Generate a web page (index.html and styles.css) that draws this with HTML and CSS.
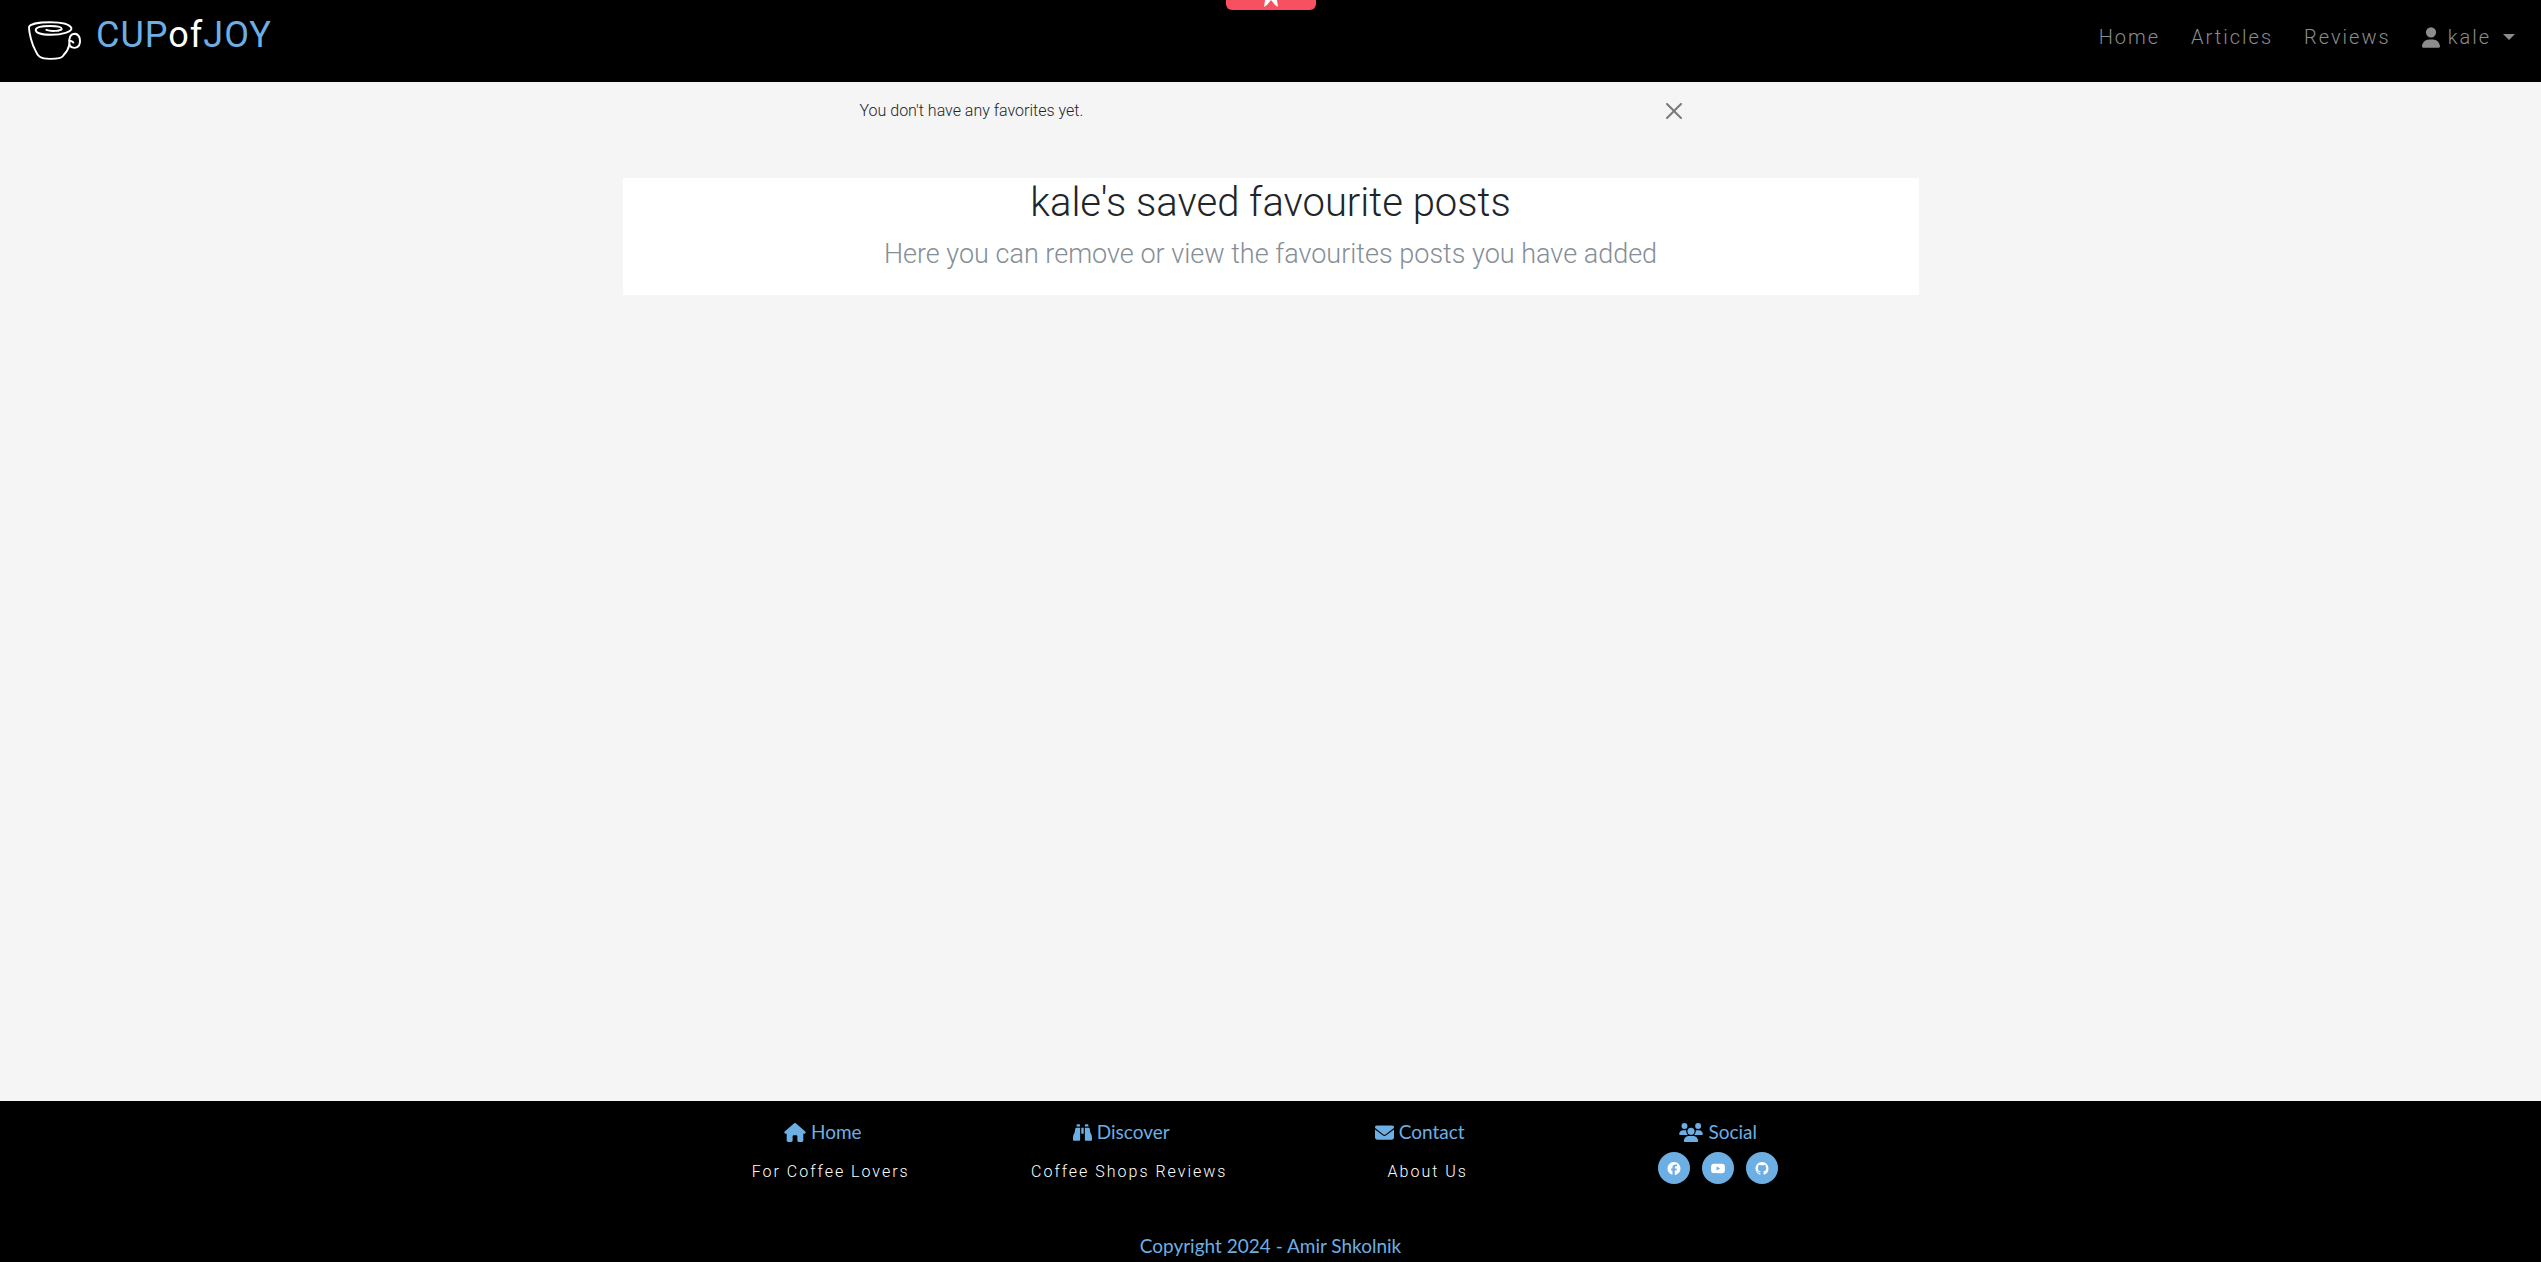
FILE: index.html
```html
<!DOCTYPE html>
<html lang="en">
<head>
<meta charset="utf-8">
<meta name="viewport" content="width=device-width, initial-scale=1">
<title>Cup of Joy - Favourites</title>
<link rel="stylesheet" href="styles.css">
</head>
<body>
<header class="navbar">
  <a class="brand" href="#">
    <svg class="brand-cup" viewBox="0 0 56 42" fill="none" stroke="#fff" stroke-width="2" stroke-linecap="round" stroke-linejoin="round" aria-hidden="true">
      <path d="M45 7C43 3 34 1 23 1C11 1 2 3 1 6C1 12 4 24 8 31C10 36 12 39 23 39C31 39 36 38 37 35C41 31 42 28 43 24M45 7C46 11 35 14 24 14C14 14 8 12 8 9C8 6 15 5 23 5C30 5 35 6 35 8C34 10 24 11 19 9"/>
      <path d="M43 24C42 17 44 13 49 13C54 14 55 20 53 25C51 28 46 29 43 25C42 21 44 19 47 22"/>
    </svg>
    <span class="brand-name">CUP<span class="brand-of">of</span>JOY</span>
  </a>
  <nav class="nav-links" aria-label="Main">
    <a href="#">Home</a>
    <a href="#">Articles</a>
    <a href="#">Reviews</a>
    <a class="nav-user" href="#">
      <svg class="user-icon" viewBox="0 0 448 512" fill="currentColor" aria-hidden="true"><path d="M224 256A128 128 0 1 0 224 0a128 128 0 1 0 0 256zm-45.700 48C79.800 304 0 383.800 0 482.300C0 498.700 13.300 512 29.700 512H418.300c16.400 0 29.700-13.300 29.700-29.700C448 383.800 368.200 304 269.700 304H178.300z"/></svg>
      <span>kale</span><span class="caret"></span>
    </a>
  </nav>
  <button class="bookmark" type="button" aria-label="Bookmark">
    <svg viewBox="0 0 14 8" fill="#fff" aria-hidden="true"><path d="M1 0H13L14 7L11 5L7 0L3 5L0 7Z"/></svg>
  </button>
</header>

<main class="content">
  <div class="alert" role="alert">
    <span>You don't have any favorites yet.</span>
    <button class="close" type="button" aria-label="Close">
      <svg viewBox="0 0 16 16" aria-hidden="true"><path d="M.293.293a1 1 0 0 1 1.414 0L8 6.586 14.293.293a1 1 0 1 1 1.414 1.414L9.414 8l6.293 6.293a1 1 0 0 1-1.414 1.414L8 9.414l-6.293 6.293a1 1 0 0 1-1.414-1.414L6.586 8 .293 1.707a1 1 0 0 1 0-1.414z"/></svg>
    </button>
  </div>
  <section class="intro">
    <h1>kale's saved favourite posts</h1>
    <p>Here you can remove or view the favourites posts you have added</p>
  </section>
</main>

<footer class="footer">
  <div class="footer-cols">
    <section>
      <h2><svg class="ico-home" viewBox="0 0 576 512" aria-hidden="true"><path d="M575.800 255.500c0 18-15 32.100-32 32.100h-32l.7 160.200c0 2.700-.2 5.400-.5 8.100V472c0 22.100-17.900 40-40 40H392c-22.100 0-40-17.900-40-40V360c0-17.700-14.300-32-32-32H256c-17.700 0-32 14.300-32 32v112c0 22.100-17.900 40-40 40H104c-22.100 0-40-17.900-40-40V287.600H32c-18 0-32-14-32-32.100c0-9 3-17 10-24L266.400 8c7-7 15-8 22-8s15 2 21 7L564.800 231.500c8 7 12 15 11 24z"/></svg>Home</h2>
      <ul><li><a href="#">For Coffee Lovers</a></li></ul>
    </section>
    <section>
      <h2><svg viewBox="0 0 512 512" aria-hidden="true"><path d="M128 32h32c17.700 0 32 14.300 32 32V96H96V64c0-17.700 14.300-32 32-32zm64 96V448c0 17.700-14.300 32-32 32H32c-17.700 0-32-14.300-32-32V388.900c0-34.600 9.400-68.600 27.200-98.300C40.900 267.800 49.700 242.400 53 216L60.500 156c2-16 15.600-28 31.800-28H192zm227.800 0c16.100 0 29.800 12 31.800 28L459 216c3.300 26.400 12.100 51.800 25.800 74.600c17.800 29.700 27.200 63.700 27.200 98.300V448c0 17.700-14.300 32-32 32H352c-17.700 0-32-14.300-32-32V128h99.800zM320 64c0-17.700 14.300-32 32-32h32c17.700 0 32 14.300 32 32V96H320V64zm-32 64V288H224V128h64z"/></svg>Discover</h2>
      <ul><li><a href="#">Coffee Shops Reviews</a></li></ul>
    </section>
    <section>
      <h2><svg viewBox="0 0 512 512" aria-hidden="true"><path d="M48 64C21.500 64 0 85.500 0 112c0 15.100 7.100 29.300 19.200 38.400L236.800 313.600c11.400 8.500 27 8.500 38.400 0L492.800 150.400c12.100-9.100 19.200-23.300 19.200-38.400c0-26.500-21.500-48-48-48H48zM0 176V384c0 35.300 28.700 64 64 64H448c35.300 0 64-28.700 64-64V176L294.400 339.200c-22.800 17.100-54 17.100-76.800 0L0 176z"/></svg>Contact</h2>
      <ul><li><a href="#">About Us</a></li></ul>
    </section>
    <section>
      <h2><svg class="ico-users" viewBox="0 0 640 512" aria-hidden="true"><path d="M144 0a80 80 0 1 1 0 160A80 80 0 1 1 144 0zM512 0a80 80 0 1 1 0 160A80 80 0 1 1 512 0zM0 298.700C0 239.800 47.800 192 106.700 192h42.700c15.900 0 31 3.500 44.600 9.700c-1.300 7.200-1.900 14.700-1.900 22.300c0 38.200 16.800 72.500 43.300 96H21.300C9.600 320 0 310.400 0 298.700zM405.300 320h-.7c26.600-23.500 43.300-57.800 43.300-96c0-7.600-.7-15-1.900-22.300c13.600-6.300 28.700-9.700 44.600-9.700h42.700C592.200 192 640 239.800 640 298.700c0 11.800-9.600 21.300-21.300 21.300H405.300zM224 224a96 96 0 1 1 192 0 96 96 0 1 1-192 0zM128 485.300C128 411.700 187.700 352 261.300 352H378.700C452.300 352 512 411.700 512 485.300c0 14.700-11.900 26.700-26.700 26.700H154.700c-14.700 0-26.700-11.900-26.700-26.700z"/></svg>Social</h2>
      <div class="social">
        <a href="#" aria-label="Facebook"><svg viewBox="0 0 512 512" aria-hidden="true"><path d="M512 256C512 114.600 397.400 0 256 0S0 114.600 0 256C0 376 82.700 476.800 194.200 504.500V334.200H141.400V256h52.800V222.300c0-87.100 39.400-127.500 125-127.500c16.200 0 44.200 3.200 55.700 6.400V172c-6-.6-16.500-1-29.600-1c-42 0-58.200 15.900-58.200 57.200V256h83.600l-14.400 78.200H287V510.100C413.800 494.800 512 386.900 512 256z"/></svg></a>
        <a href="#" aria-label="YouTube"><svg viewBox="0 0 576 512" aria-hidden="true"><path d="M549.655 124.083c-6.281-23.650-24.787-42.276-48.284-48.597C458.781 64 288 64 288 64S117.220 64 74.629 75.486c-23.497 6.322-42.003 24.947-48.284 48.597-11.412 42.867-11.412 132.305-11.412 132.305s0 89.438 11.412 132.305c6.281 23.650 24.787 41.500 48.284 47.821C117.220 448 288 448 288 448s170.780 0 213.371-11.486c23.497-6.321 42.003-24.171 48.284-47.821 11.412-42.867 11.412-132.305 11.412-132.305s0-89.438-11.412-132.305zm-317.510 213.508V175.185l142.739 81.205-142.739 81.201z"/></svg></a>
        <a href="#" aria-label="GitHub"><svg viewBox="0 0 16 16" aria-hidden="true"><path d="M8 0C3.580 0 0 3.580 0 8c0 3.540 2.290 6.530 5.470 7.590.4.070.55-.17.55-.38 0-.19-.01-.82-.01-1.490-2.010.37-2.530-.49-2.690-.94-.09-.23-.48-.94-.82-1.130-.28-.15-.68-.52-.01-.53.63-.01 1.080.58 1.230.82.72 1.210 1.870.87 2.330.66.070-.52.28-.87.51-1.070-1.780-.2-3.640-.89-3.640-3.950 0-.87.31-1.590.82-2.150-.08-.2-.36-1.020.080-2.120 0 0 .67-.21 2.200.82.64-.18 1.320-.27 2-.27s1.360.09 2 .27c1.530-1.040 2.200-.82 2.200-.82.44 1.100.16 1.920.080 2.120.51.56.82 1.270.82 2.150 0 3.070-1.870 3.750-3.650 3.950.29.25.54.73.54 1.480 0 1.070-.01 1.930-.01 2.200 0 .21.15.46.55.38A8.010 8.010 0 0 0 16 8c0-4.420-3.580-8-8-8z"/></svg></a>
      </div>
    </section>
  </div>
  <p class="copyright">Copyright 2024 - Amir Shkolnik</p>
</footer>
</body>
</html>
```
FILE: styles.css
```css
* {
  box-sizing: border-box;
}

body {
  margin: 0;
  min-height: 100vh;
  display: flex;
  flex-direction: column;
  background: #f5f5f5;
  color: #212529;
  font: 300 16px/24px Roboto, sans-serif;
}

a {
  color: inherit;
  text-decoration: none;
}

h1,
h2,
p,
ul {
  margin: 0;
  padding: 0;
  font-weight: inherit;
}

/* Header */
.navbar {
  position: relative;
  display: flex;
  justify-content: space-between;
  align-items: flex-start;
  padding: 8px 26px 20px 28px;
  background: #000;
}

.brand {
  display: flex;
  gap: 14px;
}

.brand-cup {
  width: 54px;
  height: 41px;
  margin-top: 13px;
}

.brand-name {
  color: #6daee3;
  font-size: 36px;
  line-height: 54px;
  font-weight: 400;
  letter-spacing: 1px;
}

.brand-of {
  color: #fff;
}

.nav-links {
  display: flex;
  gap: 31px;
  padding-top: 14px;
  color: #8c8c8c;
  font-size: 20px;
  line-height: 30px;
  letter-spacing: 2px;
}

.nav-user {
  display: flex;
  align-items: center;
  gap: 8px;
}

.user-icon {
  width: 18px;
  height: 21px;
}

.caret {
  margin-left: 4px;
  border: 6px solid transparent;
  border-top-color: currentColor;
  border-bottom: 0;
}

.bookmark {
  position: absolute;
  top: 0;
  left: 50%;
  width: 90px;
  height: 10px;
  padding: 0;
  display: flex;
  justify-content: center;
  transform: translateX(-50%);
  border: 0;
  border-radius: 0 0 6px 6px;
  background: #f75060;
}

.bookmark svg {
  width: 14px;
  height: 8px;
}

/* Page content */
.content {
  flex: 1;
  padding: 0 12px;
}

.alert {
  display: flex;
  justify-content: space-between;
  align-items: center;
  max-width: 856px;
  margin: 0 auto 38px;
  padding: 17px;
}

.close {
  width: 16px;
  height: 16px;
  padding: 0;
  border: 0;
  background: none;
  opacity: 0.5;
}

.close svg {
  display: block;
}

.intro {
  max-width: 1296px;
  margin: 0 auto;
  padding: 1px 0 22px;
  background: #fff;
  text-align: center;
}

.intro h1 {
  font-size: 40px;
  line-height: 48px;
  margin-bottom: 8px;
}

.intro p {
  color: #868e96;
  font-size: 27px;
  line-height: 38px;
}

/* Footer */
.footer {
  background: #000;
  color: #6daee3;
  text-align: center;
}

.footer-cols {
  display: grid;
  grid-template-columns: repeat(4, 1fr);
  max-width: 1194px;
  margin: 0 auto;
  padding-top: 19px;
}

.footer h2,
.copyright {
  font: 400 19px/24px Lato, sans-serif;
}

.footer h2 {
  display: flex;
  justify-content: center;
  align-items: center;
  gap: 5px;
}

.footer svg {
  fill: currentColor;
}

.footer h2 svg {
  width: 19px;
  height: 19px;
}

.footer h2 .ico-home {
  width: 22px;
}

.footer h2 .ico-users {
  width: 24px;
}

.footer ul {
  margin-top: 16px;
  padding-left: 16px;
  list-style: none;
  color: #fff;
  letter-spacing: 2px;
}

.social {
  display: flex;
  justify-content: center;
  gap: 12px;
  margin-top: 8px;
}

.social a {
  display: grid;
  place-items: center;
  width: 32px;
  height: 32px;
  border-radius: 50%;
  background: #6daee3;
  color: #fff;
}

.social svg {
  width: 16px;
  height: 13px;
}

.copyright {
  padding: 50px 0 4px;
}
```
